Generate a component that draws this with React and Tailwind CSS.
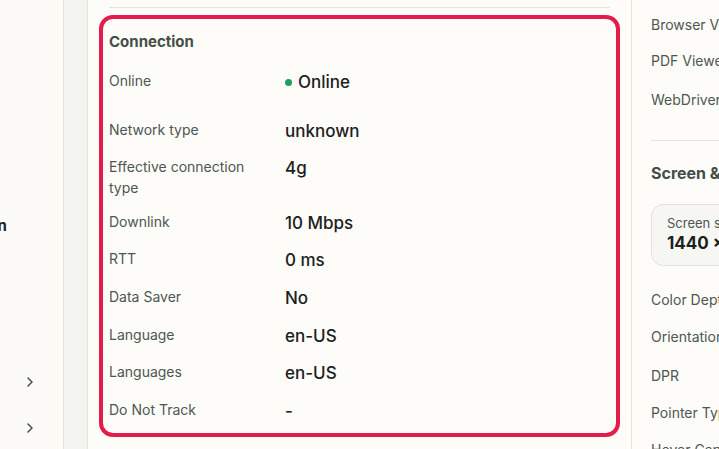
import React from 'react';

const ROWS = [
  { label: 'Network type', value: 'unknown' },
  { label: 'Effective connection type', value: '4g' },
  { label: 'Downlink', value: '10 Mbps' },
  { label: 'RTT', value: '0 ms' },
  { label: 'Data Saver', value: 'No' },
  { label: 'Language', value: 'en-US' },
  { label: 'Languages', value: 'en-US' },
  { label: 'Do Not Track', value: '-' },
];

function Chevron() {
  return (
    <svg width="8" height="12" viewBox="0 0 8 12" fill="none" stroke="#4d5752" strokeWidth="1.6" strokeLinecap="round" strokeLinejoin="round">
      <path d="M2 2l4 4-4 4" />
    </svg>
  );
}

function Row({ label, children }) {
  return (
    <div className="flex items-start">
      <div className="w-[176px] shrink-0 pr-3 text-[14px] leading-[21px] text-[#4d5752]">{label}</div>
      <div className="text-[17px] leading-[25px] font-medium text-[#1c211e]">{children}</div>
    </div>
  );
}

export default function App() {
  return (
    <div className="flex h-[449px] w-[719px] overflow-hidden bg-[#fdfcf8] font-['Inter',sans-serif]">
      {/* Sidebar */}
      <aside className="w-[64px] shrink-0 overflow-hidden border-r border-[#e4e3dd] bg-[#fcfbf7]">
        <div className="flex h-full flex-col">
          <div className="h-[216px]" />
          <div className="ml-[-78px] whitespace-nowrap text-[15px] font-bold leading-[20px] text-[#1c211e]">Connection</div>
          <div className="h-[140px]" />
          <div className="flex flex-col gap-[34px] pl-[26px]">
            <Chevron />
            <Chevron />
          </div>
        </div>
      </aside>
      <div className="w-[24px] shrink-0 border-r border-[#e4e3dd] bg-[#f3f3ef]" />

      {/* Main */}
      <main className="w-[543px] shrink-0 px-[11px]">
        <div className="mx-[10px] mt-[7px] h-px bg-[#e4e3dd]" />
        <section className="mt-[7px] rounded-[14px] border-4 border-[#e31c4b] pb-[9px] pl-[6px] pt-[13px]">
          <h3 className="text-[15px] font-bold leading-[20px] text-[#444e49]">Connection</h3>
          <div className="mt-[18px] flex flex-col gap-[12.6px]">
            <div className="h-[36px]">
              <Row label="Online">
                <span className="flex items-center gap-[6px]">
                  <span className="h-[7px] w-[7px] rounded-full bg-[#1f9d63]" />
                  Online
                </span>
              </Row>
            </div>
            {ROWS.map(r => (
              <Row key={r.label} label={r.label}>{r.value}</Row>
            ))}
          </div>
        </section>
      </main>

      {/* Right panel */}
      <aside className="flex-1 overflow-hidden border-l border-[#e4e3dd] pl-[19px]">
        <div className="flex flex-col whitespace-nowrap text-[14px] text-[#4d5752]">
          <div className="mt-[14px] leading-[22px]">Browser Vendor</div>
          <div className="mt-[14px] leading-[22px]">PDF Viewer</div>
          <div className="mt-[17px] leading-[22px]">WebDriver</div>
          <div className="mt-[29px] h-px w-[200px] bg-[#e4e3dd]" />
          <div className="mt-[21px] text-[16px] font-bold leading-[22px] text-[#444e49]">Screen &amp; Display</div>
          <div className="mt-[20px] h-[62px] w-[200px] rounded-[12px] border border-[#e4e3dd] bg-[#f6f6f2] px-[15px] pt-[9px]">
            <div className="text-[13px] leading-[18px] text-[#4d5752]">Screen size</div>
            <div className="text-[17px] font-bold leading-[22px] text-[#1c211e]">1440 × 900</div>
          </div>
          <div className="mt-[23px] leading-[22px]">Color Depth</div>
          <div className="mt-[15px] leading-[22px]">Orientation</div>
          <div className="mt-[17px] leading-[22px]">DPR</div>
          <div className="mt-[15px] leading-[22px]">Pointer Type</div>
          <div className="mt-[15px] leading-[22px]">Hover Capable</div>
        </div>
      </aside>
    </div>
  );
}
